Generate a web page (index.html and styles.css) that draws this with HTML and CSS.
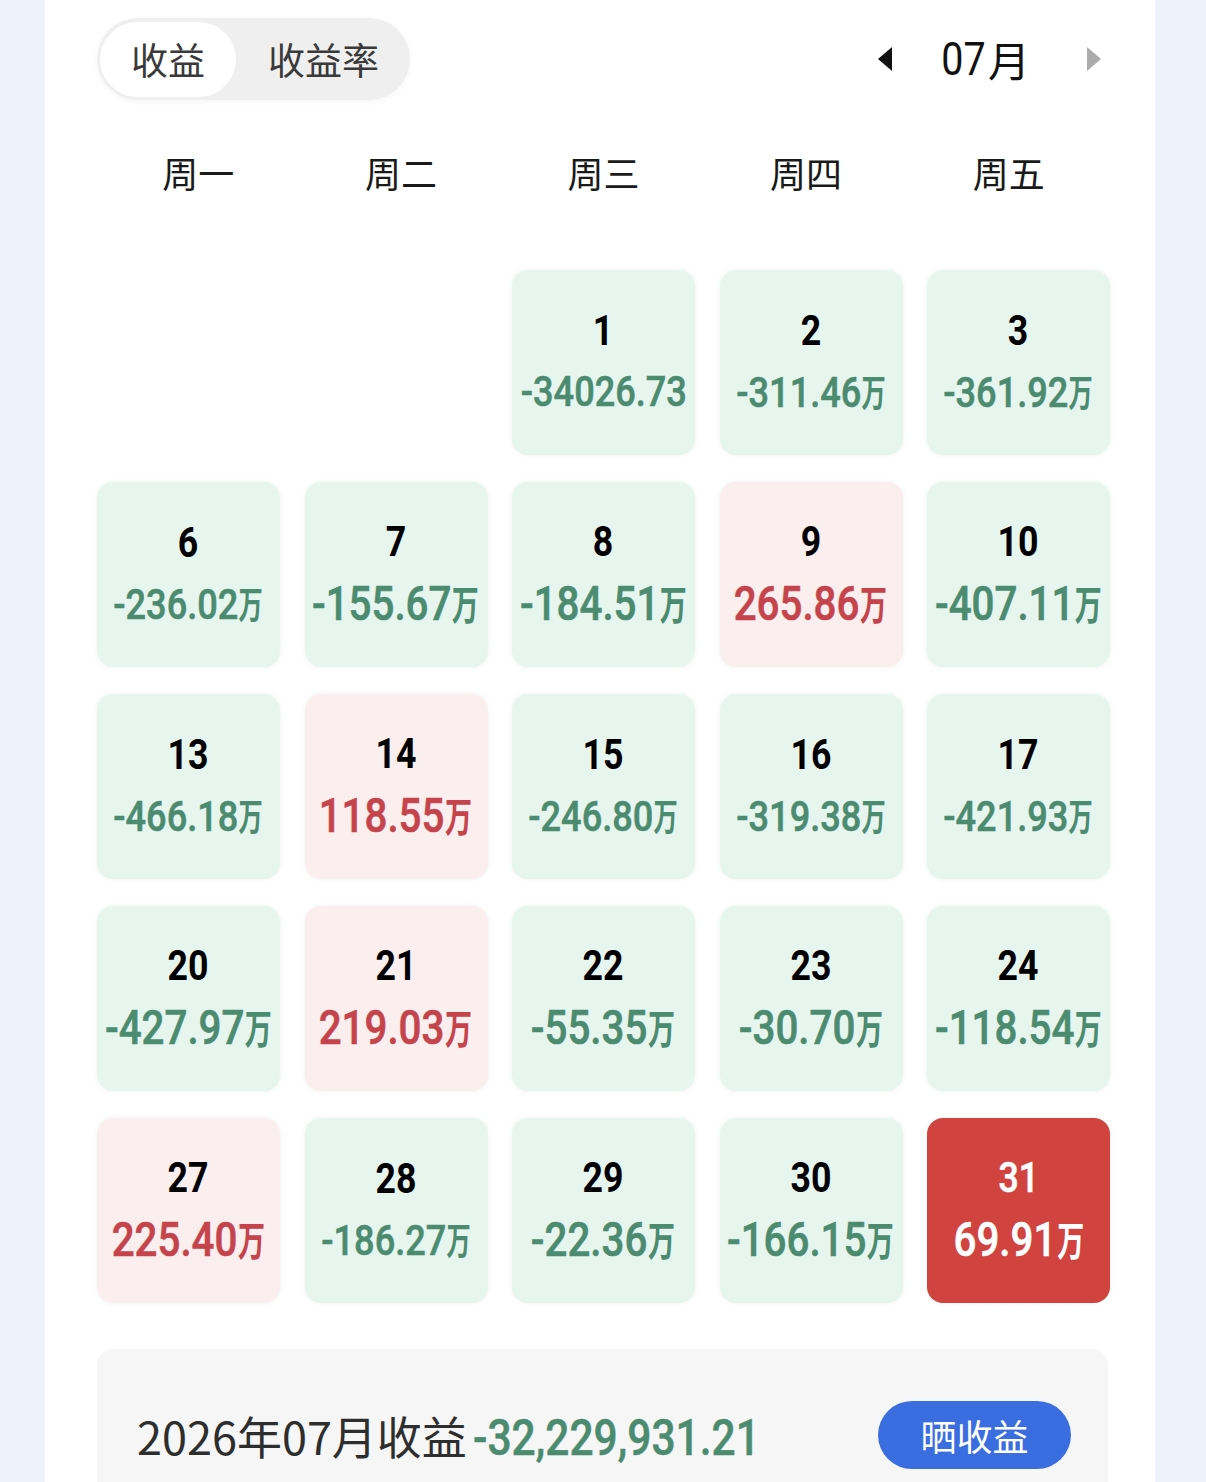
FILE: index.html
```html
<!DOCTYPE html>
<html lang="zh-CN">
<head>
<meta charset="utf-8">
<title>收益日历</title>
<link rel="stylesheet" href="styles.css">
</head>
<body>
<div class="panel">
  <div class="topbar">
    <div class="toggle">
      <span class="tab active">收益</span>
      <span class="tab">收益率</span>
    </div>
    <div class="monthnav">
      <svg class="arrow" width="16" height="26" viewBox="0 0 16 26"><polygon points="15,1 15,25 1,13" fill="#111"/></svg>
      <span class="month"><span class="mnum">07</span><span class="cjk">月</span></span>
      <svg class="arrow" width="16" height="26" viewBox="0 0 16 26"><polygon points="1,1 1,25 15,13" fill="#ababab"/></svg>
    </div>
  </div>

  <div class="weekdays">
    <span>周一</span><span>周二</span><span>周三</span><span>周四</span><span>周五</span>
  </div>

  <div class="grid">
    <div class="cell empty"></div>
    <div class="cell empty"></div>
    <div class="cell down"><span class="d">1</span><span class="v">-34026.73</span></div>
    <div class="cell down"><span class="d">2</span><span class="v">-311.46<span class="u">万</span></span></div>
    <div class="cell down"><span class="d">3</span><span class="v">-361.92<span class="u">万</span></span></div>

    <div class="cell down"><span class="d">6</span><span class="v">-236.02<span class="u">万</span></span></div>
    <div class="cell down"><span class="d">7</span><span class="v lg">-155.67<span class="u">万</span></span></div>
    <div class="cell down"><span class="d">8</span><span class="v lg">-184.51<span class="u">万</span></span></div>
    <div class="cell up"><span class="d">9</span><span class="v lg">265.86<span class="u">万</span></span></div>
    <div class="cell down"><span class="d">10</span><span class="v lg">-407.11<span class="u">万</span></span></div>

    <div class="cell down"><span class="d">13</span><span class="v">-466.18<span class="u">万</span></span></div>
    <div class="cell up"><span class="d">14</span><span class="v lg">118.55<span class="u">万</span></span></div>
    <div class="cell down"><span class="d">15</span><span class="v">-246.80<span class="u">万</span></span></div>
    <div class="cell down"><span class="d">16</span><span class="v">-319.38<span class="u">万</span></span></div>
    <div class="cell down"><span class="d">17</span><span class="v">-421.93<span class="u">万</span></span></div>

    <div class="cell down"><span class="d">20</span><span class="v lg">-427.97<span class="u">万</span></span></div>
    <div class="cell up"><span class="d">21</span><span class="v lg">219.03<span class="u">万</span></span></div>
    <div class="cell down"><span class="d">22</span><span class="v lg">-55.35<span class="u">万</span></span></div>
    <div class="cell down"><span class="d">23</span><span class="v lg">-30.70<span class="u">万</span></span></div>
    <div class="cell down"><span class="d">24</span><span class="v lg">-118.54<span class="u">万</span></span></div>

    <div class="cell up"><span class="d">27</span><span class="v lg">225.40<span class="u">万</span></span></div>
    <div class="cell down"><span class="d">28</span><span class="v">-186.27<span class="u">万</span></span></div>
    <div class="cell down"><span class="d">29</span><span class="v lg">-22.36<span class="u">万</span></span></div>
    <div class="cell down"><span class="d">30</span><span class="v lg">-166.15<span class="u">万</span></span></div>
    <div class="cell today"><span class="d">31</span><span class="v lg">69.91<span class="u">万</span></span></div>
  </div>

  <div class="summary">
    <div class="total"><span class="label">2026年07月收益</span><span class="amount">-32,229,931.21</span></div>
    <button class="share">晒收益</button>
  </div>
</div>
</body>
</html>
```

FILE: styles.css
```css
html, body {
  margin: 0;
  padding: 0;
}
body {
  background: #eef2fb;
  overflow: hidden;
  height: 1482px;
  font-family: "Noto Sans CJK SC", "Noto Sans", sans-serif;
  color: #222;
}
.panel {
  margin-left: 45px;
  width: 1110px;
  box-sizing: border-box;
  height: 1482px;
  background: #fff;
  padding: 18px 45px 0 52px;
  overflow: hidden;
}
.topbar {
  display: flex;
  justify-content: space-between;
  align-items: center;
  height: 82px;
}
.toggle {
  display: flex;
  align-items: center;
  height: 82px;
  width: 313px;
  box-sizing: border-box;
  padding: 0 3px;
  background: #efefef;
  border-radius: 41px;
  box-shadow: 0 2px 6px rgba(0,0,0,0.04);
  white-space: nowrap;
}
.tab {
  flex-shrink: 0;
  font-size: 37px;
  line-height: 75px;
  color: #3a3a3a;
}
.tab.active {
  background: #fff;
  border-radius: 38px;
  width: 136px;
  text-align: center;
  margin-right: 32px;
}
.monthnav {
  display: flex;
  align-items: center;
  margin-right: 8px;
}
.arrow {
  display: block;
}
.month {
  display: flex;
  align-items: center;
  color: #111;
  margin: 0 56px 0 48px;
  line-height: 60px;
}
.mnum {
  display: inline-block;
  font-family: Roboto, sans-serif;
  font-size: 47px;
  transform: scaleX(0.84);
  margin: 0 -2px 0 -4px;
}
.cjk {
  font-family: "Noto Sans CJK SC", sans-serif;
  font-size: 42px;
}
.weekdays {
  display: grid;
  grid-template-columns: repeat(5, 1fr);
  margin-top: 52px;
  text-align: center;
  font-size: 36px;
  line-height: 40px;
  color: #1a1a1a;
}
.grid {
  display: grid;
  grid-template-columns: repeat(5, 183px);
  grid-auto-rows: 185px;
  column-gap: 24.5px;
  row-gap: 27px;
  margin-top: 78px;
}
.cell {
  border-radius: 16px;
  display: flex;
  flex-direction: column;
  align-items: center;
  justify-content: center;
  font-family: Roboto, sans-serif;
  box-shadow: 0 0 4px rgba(220,230,228,0.5);
}
.cell.empty {
  background: transparent;
  box-shadow: none;
}
.cell.down {
  background: #e7f5ef;
}
.cell.up {
  background: #fbeeee;
}
.cell.today {
  background: #d0433f;
}
.d {
  display: inline-block;
  font-size: 42px;
  font-weight: 700;
  line-height: 44px;
  color: #000;
  transform: scaleX(0.85);
}
.v {
  display: inline-block;
  font-size: 43px;
  font-weight: 500;
  line-height: 50px;
  margin-top: 13px;
  white-space: nowrap;
  transform: scaleX(0.84);
  -webkit-text-stroke: 0.6px currentColor;
}
.v.lg {
  font-size: 48px;
}
.down .v { color: #4b8b70; }
.up .v { color: #c5444c; }
.today .d, .today .v { color: #fff; }
.today .d { font-weight: 500; -webkit-text-stroke: 0.6px currentColor; }
.u {
  display: inline-block;
  font-family: "Noto Sans CJK SC", sans-serif;
  font-weight: 700;
  font-size: 0.86em;
  transform: scaleX(0.78);
  margin: 0 -0.1em 0 -0.09em;
  -webkit-text-stroke: 0;
}
.summary {
  margin-top: 46px;
  width: 1011px;
  height: 172px;
  box-sizing: border-box;
  background: #f6f6f6;
  border-radius: 16px;
  display: flex;
  align-items: center;
  justify-content: space-between;
  padding: 0 37px 0 40px;
}
.total {
  display: flex;
  align-items: baseline;
}
.label {
  font-size: 45px;
  color: #2e2e2e;
}
.amount {
  display: inline-block;
  font-family: Roboto, sans-serif;
  font-size: 50px;
  font-weight: 500;
  color: #4b8b70;
  transform: scaleX(0.85);
  transform-origin: left center;
  margin-left: 6px;
  -webkit-text-stroke: 0.5px currentColor;
}
.share {
  width: 193px;
  height: 68px;
  border: none;
  border-radius: 34px;
  background: #3a6ee0;
  color: #fff;
  font-family: "Noto Sans CJK SC", sans-serif;
  font-size: 36px;
  padding: 0;
}
```
